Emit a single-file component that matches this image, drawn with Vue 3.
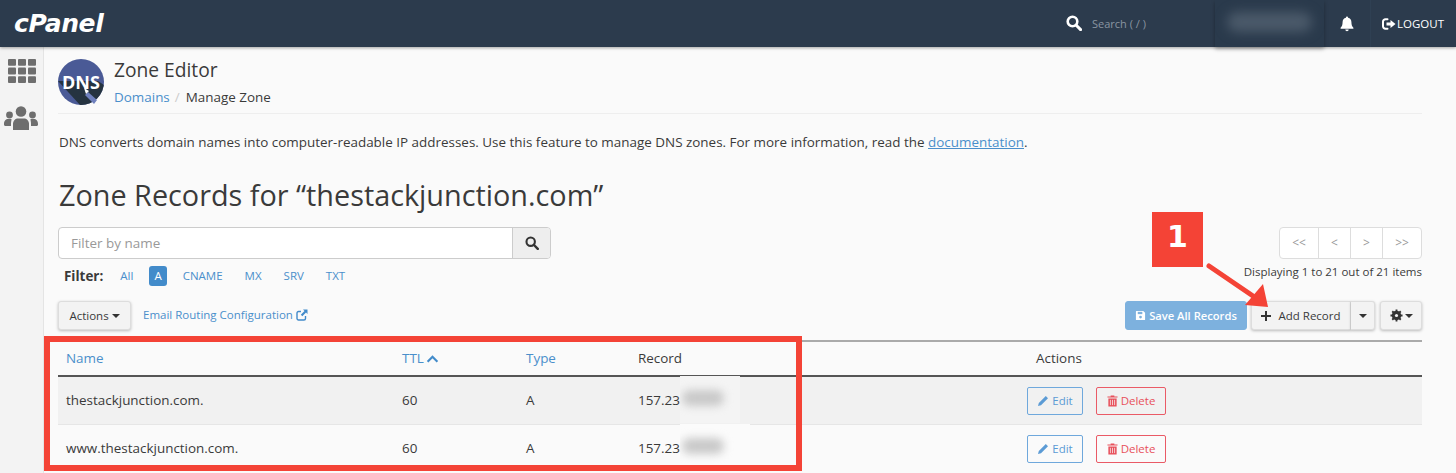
<script setup>
const filters = ["All", "A", "CNAME", "MX", "SRV", "TXT"];
const pageButtons = ["<<", "<", ">", ">>"];
const records = [
  { name: "thestackjunction.com.", ttl: 60, type: "A", value: "157.23" },
  { name: "www.thestackjunction.com.", ttl: 60, type: "A", value: "157.23" },
];
</script>

<template>
  <div class="page">
    <header class="topbar">
      <span class="logo">cPanel</span>
      <div class="topbar-right">
        <div class="search">
          <svg class="search-icon" viewBox="0 0 16 16"><circle cx="6.5" cy="6.5" r="4.8" fill="none" stroke="currentColor" stroke-width="2.6" /><path d="M10 10l4.6 4.6" stroke="currentColor" stroke-width="3" stroke-linecap="round" /></svg>
          <span>Search ( / )</span>
        </div>
        <div class="user"><div class="user-blur"></div></div>
        <div class="bell">
          <svg viewBox="0 0 16 16" width="16" height="17"><path d="M8 1a1.2 1.2 0 0 0-1.1 1.2C4.800 2.700 3.600 4.400 3.600 6.600c0 3.200-.8 4.600-2 5.700v.9h12.800v-.9c-1.200-1.100-2-2.500-2-5.700 0-2.200-1.200-3.900-3.300-4.400A1.200 1.200 0 0 0 8 1zM6.300 14a1.700 1.700 0 0 0 3.400 0z" fill="#fff" /></svg>
        </div>
        <div class="logout">
          <svg viewBox="0 0 14 12" width="14" height="12"><path d="M5.500 1.300H3.400A2.400 2.400 0 0 0 1 3.700v4.600a2.400 2.400 0 0 0 2.400 2.400h2.100" fill="none" stroke="#fff" stroke-width="2" stroke-linecap="round" /><path d="M4.500 4.500h4V2l5 4-5 4V7.500h-4z" fill="#fff" /></svg>
          <span>LOGOUT</span>
        </div>
      </div>
    </header>

    <div class="body">
      <aside class="sidebar">
        <svg class="side-grid" viewBox="0 0 28 24" width="28" height="24">
          <g fill="#6e6e6e">
            <rect x="0" y="0" width="8" height="6.800" rx="1" /><rect x="10" y="0" width="8" height="6.800" rx="1" /><rect x="20" y="0" width="8" height="6.800" rx="1" />
            <rect x="0" y="8.600" width="8" height="6.800" rx="1" /><rect x="10" y="8.600" width="8" height="6.800" rx="1" /><rect x="20" y="8.600" width="8" height="6.800" rx="1" />
            <rect x="0" y="17.200" width="8" height="6.800" rx="1" /><rect x="10" y="17.200" width="8" height="6.800" rx="1" /><rect x="20" y="17.200" width="8" height="6.800" rx="1" />
          </g>
        </svg>
        <svg class="side-users" viewBox="0 0 34 24" width="34" height="24">
          <g fill="#6e6e6e">
            <circle cx="17" cy="5.500" r="5.300" /><circle cx="5.500" cy="9" r="3.400" /><circle cx="28.500" cy="9" r="3.400" />
            <path d="M9 24v-6c0-3.500 2.500-5.500 5-5.500h6c2.500 0 5 2 5 5.500v6z" /><path d="M0 18c0-3.500 2-5 4-5h3.500C7.500 14.500 7 16 7 18v2H1.500C.6 20 0 19.400 0 18.500zM34 18c0-3.500-2-5-4-5h-3.500c0 1.500.5 3 .5 5v2h5.500c.9 0 1.500-.6 1.500-1.500z" />
          </g>
        </svg>
      </aside>

      <main class="content">
        <div class="app-head">
          <svg class="dns-icon" viewBox="0 0 46 46" width="46" height="46">
            <defs><clipPath id="dns-clip"><circle cx="23" cy="23" r="23" /></clipPath></defs>
            <circle cx="23" cy="23" r="23" fill="#4a5a96" />
            <path clip-path="url(#dns-clip)" d="M0 22h40l6 4v10L36 46H22z" fill="#253340" />
            <text x="4" y="30" class="dns-text">DNS</text>
            <path d="M30 33l9 8-3 4-9-9z" fill="#6f80bd" />
            <path d="M26 29l5 3-3 3z" fill="#fff" />
          </svg>
          <div>
            <h1 class="app-title">Zone Editor</h1>
            <div class="crumbs"><a>Domains</a><span class="slash">/</span><span>Manage Zone</span></div>
          </div>
        </div>

        <p class="desc">DNS converts domain names into computer-readable IP addresses. Use this feature to manage DNS zones. For more information, read the <a>documentation</a>.</p>

        <h2 class="zone-title">Zone Records for “thestackjunction.com”</h2>

        <div class="controls">
          <div>
            <div class="filter-input">
              <span class="placeholder">Filter by name</span>
              <span class="filter-btn">
                <svg viewBox="0 0 16 16" width="14" height="14"><circle cx="6.500" cy="6.500" r="4.800" fill="none" stroke="#333" stroke-width="2.400" /><path d="M10 10l4.600 4.600" stroke="#333" stroke-width="2.800" stroke-linecap="round" /></svg>
              </span>
            </div>
            <div class="filter-row">
              <strong>Filter:</strong>
              <a v-for="f in filters" :key="f" class="filter-link" :class="{ active: f === 'A' }">{{ f }}</a>
            </div>
          </div>
          <div class="paging">
            <div class="pager">
              <span v-for="p in pageButtons" :key="p" class="pager-btn">{{ p }}</span>
            </div>
            <div class="count">Displaying 1 to 21 out of 21 items</div>
          </div>
        </div>

        <div class="toolbar">
          <button class="btn actions-btn">Actions <i class="caret"></i></button>
          <a class="email-link">Email Routing Configuration
            <svg viewBox="0 0 12 12" width="12" height="12"><path d="M9.500 7v2.500a1.500 1.500 0 0 1-1.500 1.500H2.500A1.500 1.500 0 0 1 1 9.500V4a1.500 1.500 0 0 1 1.500-1.500H5" fill="none" stroke="#428bca" stroke-width="1.400" /><path d="M7 .5h4.500V5L10 3.500 6.300 7.200 4.800 5.700 8.500 2z" fill="#428bca" /></svg>
          </a>
          <div class="toolbar-right">
            <button class="btn save-btn">
              <svg viewBox="0 0 12 12" width="11" height="11"><path d="M1.500 1h7.500L11 3v7.500a.5.5 0 0 1-.5.500h-9a.5.5 0 0 1-.5-.5v-9a.5.5 0 0 1 .5-.5z" fill="#fff" /><rect x="3" y="2" width="5" height="2.500" fill="#7db1de" /><circle cx="6" cy="7.700" r="1.500" fill="#7db1de" /></svg>
              Save All Records
            </button>
            <div class="split">
              <button class="btn add-btn">
                <svg viewBox="0 0 10 10" width="10" height="10"><path d="M5 0v10M0 5h10" stroke="#333" stroke-width="2" /></svg>
                Add Record
              </button>
              <button class="btn add-caret"><i class="caret"></i></button>
            </div>
            <button class="btn gear-btn">
              <svg viewBox="0 0 14 14" width="13" height="13"><circle cx="7" cy="7" r="3.800" fill="none" stroke="#333" stroke-width="2.600" /><path d="M7 .5v13M.5 7h13M2.400 2.400l9.200 9.200M11.600 2.400l-9.200 9.200" stroke="#333" stroke-width="2" /><circle cx="7" cy="7" r="1.700" fill="#f3f3f3" /></svg>
              <i class="caret"></i>
            </button>
          </div>
        </div>

        <table class="records">
          <thead>
            <tr>
              <th class="col-name"><a>Name</a></th>
              <th class="col-ttl">
                <a>TTL
                  <svg viewBox="0 0 14 9" width="13" height="8"><path d="M1.500 7.500L7 2l5.500 5.500" fill="none" stroke="#428bca" stroke-width="2.400" /></svg>
                </a>
              </th>
              <th class="col-type"><a>Type</a></th>
              <th class="col-record">Record</th>
              <th class="col-actions">Actions</th>
            </tr>
          </thead>
          <tbody>
            <tr v-for="r in records" :key="r.name">
              <td>{{ r.name }}</td>
              <td>{{ r.ttl }}</td>
              <td>{{ r.type }}</td>
              <td>
                <span class="ip">{{ r.value }}<span class="ip-hide"><span class="ip-blur"></span></span></span>
              </td>
              <td class="cell-actions">
                <div class="row-btns">
                  <button class="row-btn edit">
                    <svg viewBox="0 0 12 12" width="12" height="12"><path d="M8.800 1l2.200 2.200-7 7-3 .8.800-3z" fill="#5b9bd5" /></svg>
                    Edit
                  </button>
                  <button class="row-btn delete">
                    <svg viewBox="0 0 12 13" width="11" height="12"><path d="M4 1.500V.5h4v1h3.500v1.300H.5V1.500zM1.500 3.800h9v8.700h-9z" fill="#e8505b" /><path d="M3.700 5.200v5.800M6 5.200v5.800M8.300 5.200v5.800" stroke="#fafafa" stroke-width=".8" /></svg>
                    Delete
                  </button>
                </div>
              </td>
            </tr>
          </tbody>
        </table>
      </main>
    </div>

    <div class="mark-box"></div>
    <div class="mark-num">1</div>
    <svg class="mark-arrow" viewBox="0 0 80 60" width="80" height="60">
      <path d="M3 3l44 30" stroke="#f44336" stroke-width="5" stroke-linecap="round" />
      <path d="M62 44L39 42 57 21z" fill="#f44336" />
    </svg>
  </div>
</template>

<style scoped>
.page {
  position: relative;
  width: 1456px;
  height: 473px;
  overflow: hidden;
  background: #fafafa;
  color: #3a3a3a;
  font-family: "Open Sans", sans-serif;
  font-size: 13.44px;
}

a {
  color: #4a8fcb;
}

.topbar {
  height: 47px;
  background: #2c3b4d;
  display: flex;
  align-items: center;
  justify-content: space-between;
  box-shadow: 0 1px 3px rgba(0, 0, 0, 0.35);
  position: relative;
  z-index: 1;
}

.logo {
  margin-left: 14px;
  color: #fff;
  font-family: "DejaVu Sans", sans-serif;
  font-size: 25px;
  font-weight: 700;
  font-style: italic;
  letter-spacing: -0.4px;
  line-height: 45px;
}

.topbar-right {
  display: flex;
  align-items: center;
  height: 47px;
}

.search {
  display: flex;
  align-items: center;
  gap: 10px;
  width: 149px;
  color: #8a95a1;
  font-size: 11px;
  margin-top: -1px;
}

.search-icon {
  width: 16px;
  height: 16px;
  color: #fff;
}

.user {
  width: 109px;
  height: 47px;
  background: #2a3a4c;
  box-shadow: 0 2px 4px rgba(0, 0, 0, 0.3);
  display: flex;
  align-items: center;
  justify-content: center;
}

.user-blur {
  width: 85px;
  height: 20px;
  margin-top: -3px;
  border-radius: 10px;
  background: #4b5a6a;
  filter: blur(6px);
}

.bell {
  width: 46px;
  height: 47px;
  display: flex;
  align-items: center;
  justify-content: center;
  border-right: 1px solid #2f4053;
}

.logout {
  width: 85px;
  display: flex;
  align-items: center;
  gap: 1px;
  padding-left: 11px;
  box-sizing: border-box;
  color: #fff;
  font-size: 11.5px;
}

.body {
  display: flex;
}

.sidebar {
  width: 44px;
  height: 426px;
  box-sizing: border-box;
  background: #f3f3f3;
  border-right: 1px solid #e4e4e4;
  display: flex;
  flex-direction: column;
  align-items: center;
  padding-top: 12px;
}

.side-users {
  margin-top: 23px;
  margin-right: 1px;
}

.content {
  width: 1364px;
  margin-left: 14px;
}

.app-head {
  display: flex;
  gap: 10px;
  height: 67px;
  padding-top: 12px;
  box-sizing: border-box;
  border-bottom: 1px solid #eee;
}

.dns-text {
  font-family: "Open Sans", sans-serif;
  font-size: 18px;
  font-weight: 700;
  fill: #fff;
}

.app-title {
  margin: 0;
  font-size: 19.2px;
  font-weight: 400;
  line-height: 22px;
}

.crumbs {
  margin-top: 4px;
  line-height: 24px;
}

.slash {
  color: #ccc;
  margin: 0 6px 0 5px;
}

.desc {
  margin: 18px 0 0;
  padding-left: 1px;
  line-height: 20px;
  white-space: nowrap;
}

.desc a {
  text-decoration: underline;
}

.zone-title {
  margin: 23px 0 0;
  padding-left: 1px;
  font-size: 28.8px;
  font-weight: 400;
  line-height: 40px;
  white-space: nowrap;
}

.controls {
  display: flex;
  justify-content: space-between;
  margin-top: 12px;
}

.filter-input {
  display: flex;
  width: 493px;
  height: 32px;
  box-sizing: border-box;
  background: #fff;
  border: 1px solid #ccc;
  border-radius: 4px;
}

.placeholder {
  flex: 1;
  padding-left: 12px;
  color: #999;
  line-height: 30px;
}

.filter-btn {
  width: 37px;
  display: flex;
  align-items: center;
  justify-content: center;
  background: #eee;
  border-left: 1px solid #ccc;
  border-radius: 0 3px 3px 0;
}

.filter-row {
  display: flex;
  align-items: center;
  margin-top: 7px;
  padding-left: 6px;
  height: 20px;
  font-size: 11.5px;
}

.filter-row strong {
  font-size: 13.44px;
  margin-right: 12px;
}

.filter-link {
  margin-right: 12px;
  padding: 0 5px;
  line-height: 20px;
}

.filter-link.active {
  background: #428bca;
  color: #fff;
  border-radius: 3px;
  margin-right: 11px;
}

.filter-link:first-of-type {
  margin-right: 11px;
}

.paging {
  width: 190px;
  display: flex;
  flex-direction: column;
  align-items: flex-end;
}

.pager {
  display: flex;
  height: 32px;
  box-sizing: border-box;
  background: #fff;
  border: 1px solid #ddd;
  border-radius: 4px;
}

.pager-btn {
  width: 31px;
  text-align: center;
  color: #999;
  font-size: 12px;
  line-height: 30px;
  border-left: 1px solid #ddd;
}

.pager-btn:first-child {
  border-left: 0;
  width: 38px;
}

.pager-btn:last-child {
  width: 38px;
}

.count {
  margin-top: 4px;
  font-size: 11.5px;
  line-height: 18px;
  white-space: nowrap;
}

.toolbar {
  display: flex;
  align-items: center;
  margin-top: 15px;
  height: 29px;
}

.btn {
  height: 29px;
  box-sizing: border-box;
  border: 1px solid #ddd;
  border-radius: 3px;
  background: #f3f3f3;
  color: #3a3a3a;
  font-family: inherit;
  font-size: 11.5px;
  padding: 0;
  box-shadow: 0 1px 3px rgba(0, 0, 0, 0.25);
  display: flex;
  align-items: center;
  justify-content: center;
}

.actions-btn {
  width: 73px;
  gap: 3px;
}

.caret {
  display: inline-block;
  width: 0;
  height: 0;
  border-top: 4px solid #333;
  border-left: 4px solid transparent;
  border-right: 4px solid transparent;
}

.email-link {
  margin-left: 12px;
  margin-top: -2px;
  font-size: 11.5px;
  display: flex;
  align-items: center;
  gap: 3px;
}

.toolbar-right {
  margin-left: auto;
  display: flex;
}

.save-btn {
  width: 122px;
  gap: 3px;
  background: #7db1de;
  border-color: #7db1de;
  color: #fff;
  font-size: 11.2px;
  font-weight: 600;
  box-shadow: none;
}

.split {
  display: flex;
  margin-left: 4px;
}

.add-btn {
  width: 100px;
  gap: 7px;
  border-radius: 3px 0 0 3px;
}

.add-caret {
  width: 24px;
  border-left: 0;
  border-radius: 0 3px 3px 0;
}

.gear-btn {
  width: 42px;
  margin-left: 5px;
  gap: 2px;
}

.records {
  width: 1364px;
  margin-top: 10px;
  border-collapse: collapse;
  table-layout: fixed;
}

.records th {
  height: 35px;
  padding: 0 0 2px 8px;
  box-sizing: border-box;
  text-align: left;
  font-weight: 400;
  border-top: 2px solid #aaa;
  border-bottom: 2px solid #555;
}

.col-name {
  width: 336px;
}

.col-ttl {
  width: 124px;
}

.col-type {
  width: 112px;
}

.col-record {
  width: 396px;
}

.records th.col-actions {
  padding-left: 10px;
}

.records th a svg {
  margin-left: -1px;
}

.records td {
  height: 48.5px;
  padding: 0 0 2px 8px;
  box-sizing: border-box;
  border-bottom: 1px solid #e6e6e6;
}

.records td.cell-actions {
  padding-bottom: 0;
}

.records tbody tr:first-child td {
  background: #f1f1f1;
}

.ip {
  position: relative;
  display: inline-block;
}

.ip-hide {
  position: absolute;
  left: 100%;
  top: -15px;
  width: 60px;
  height: 47px;
  background: #f4f4f4;
  overflow: hidden;
}

.records tbody tr:last-child .ip-hide {
  width: 70px;
  background: #fbfbfb;
}

.ip-blur {
  display: block;
  margin: 14px 0 0 2px;
  width: 42px;
  height: 16px;
  border-radius: 8px;
  background: #c9c9c9;
  filter: blur(4px);
}

.row-btns {
  display: flex;
  gap: 13px;
  margin-left: -7px;
}

.row-btn {
  height: 28px;
  box-sizing: border-box;
  background: transparent;
  border-radius: 2px;
  font-family: inherit;
  font-size: 11.5px;
  padding: 0;
  display: flex;
  align-items: center;
  justify-content: center;
  gap: 3px;
}

.edit {
  width: 56px;
  border: 1px solid #6fa8dc;
  color: #5b9bd5;
}

.delete {
  width: 70px;
  border: 1px solid #ea5a66;
  color: #e8505b;
}

.mark-box {
  position: absolute;
  left: 44px;
  top: 336px;
  width: 758px;
  height: 135px;
  box-sizing: border-box;
  border: 6px solid #f44336;
}

.mark-num {
  position: absolute;
  left: 1152px;
  top: 212px;
  width: 51px;
  height: 55px;
  background: #f44336;
  color: #fff;
  font-family: "DejaVu Sans", sans-serif;
  font-size: 30px;
  font-weight: 700;
  text-align: center;
  line-height: 50px;
}

.mark-arrow {
  position: absolute;
  left: 1206px;
  top: 263px;
}
</style>
